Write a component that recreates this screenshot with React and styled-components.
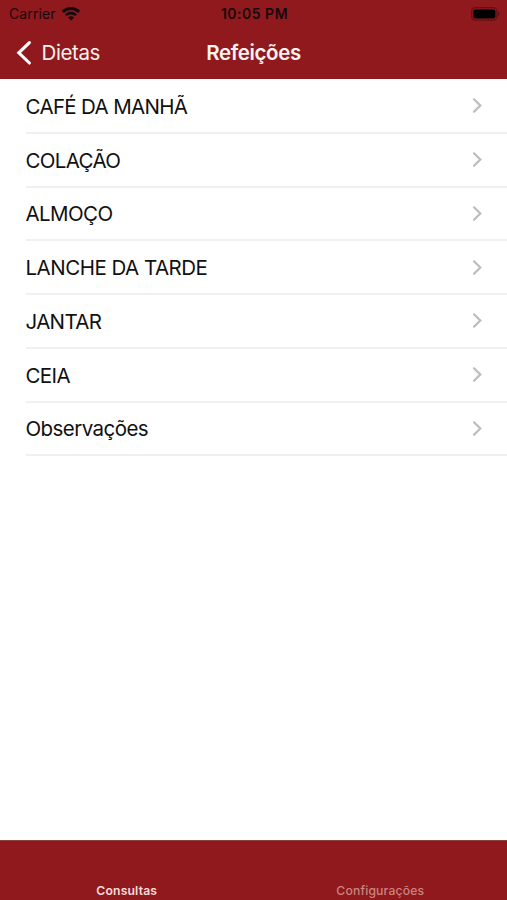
import React from "react";
import styled, { createGlobalStyle } from "styled-components";

const meals = [
  { name: "CAFÉ DA MANHÃ", key: "cafe", spacing: -0.66 },
  { name: "COLAÇÃO", key: "colacao", spacing: -0.64 },
  { name: "ALMOÇO", key: "almoco", spacing: -0.58 },
  { name: "LANCHE DA TARDE", key: "lanche", spacing: -0.5 },
  { name: "JANTAR", key: "jantar", spacing: -0.66 },
  { name: "CEIA", key: "ceia", spacing: -0.6 },
  { name: "Observações", key: "observacoes", spacing: -0.56 },
];

const tabs = [
  { name: "Consultas", key: "consultas", active: true },
  { name: "Configurações", key: "configuracoes", active: false },
];

function App() {
  return (
    <Screen>
      <GlobalStyle />
      <Header>
        <StatusBar>
          <Carrier>
            <CarrierName>Carrier</CarrierName>
            <WifiIcon />
          </Carrier>
          <Clock>10:05 PM</Clock>
          <BatteryIcon />
        </StatusBar>
        <NavBar>
          <BackButton>
            <BackIcon />
            <BackText>Dietas</BackText>
          </BackButton>
          <Title>Refeições</Title>
        </NavBar>
      </Header>
      <List>
        {meals.map((meal) => (
          <Row key={meal.key}>
            <RowText $spacing={meal.spacing}>{meal.name}</RowText>
            <Chevron />
          </Row>
        ))}
      </List>
      <TabBar>
        {tabs.map((tab) => (
          <Tab key={tab.key} $active={tab.active}>
            {tab.name}
          </Tab>
        ))}
      </TabBar>
    </Screen>
  );
}

export default App;

function WifiIcon() {
  return (
    <svg width="18" height="14" viewBox="0 0 18 14" fill="none" stroke="#16090b">
      <path d="M0.9 4.9C5.4 0.4 12.6 0.4 17.1 4.9" strokeWidth="2.9" />
      <path d="M3.9 8.1C6.8 5.4 11.2 5.4 14.1 8.1" strokeWidth="2.6" />
      <path d="M9 13.4L6 10.4C7.7 8.9 10.3 8.9 12 10.4Z" fill="#16090b" stroke="none" />
    </svg>
  );
}

function BatteryIcon() {
  return (
    <Battery width="29" height="14" viewBox="0 0 29 14">
      <rect x="0.7" y="0.7" width="25.2" height="12.4" rx="3.6" fill="none" stroke="#620f15" strokeWidth="1.2" />
      <rect x="2.4" y="2.4" width="22" height="9" rx="2" fill="#000" />
      <path d="M27 4.6C29 5.3 29 8.5 27 9.2Z" fill="#620f15" />
    </Battery>
  );
}

function BackIcon() {
  return (
    <svg width="16" height="26" viewBox="0 0 16 26" fill="none" stroke="#fff" strokeWidth="3.1">
      <path d="M13.4 2.6L2.8 12.8L13.4 23" strokeLinecap="round" strokeLinejoin="miter" />
    </svg>
  );
}

function Chevron() {
  return (
    <svg width="11" height="17" viewBox="0 0 11 17" fill="none" stroke="#bcbcbe" strokeWidth="2.2">
      <path d="M2 2.3L8.3 8.5L2 14.7" strokeLinecap="round" />
    </svg>
  );
}

const GlobalStyle = createGlobalStyle`
  body {
    margin: 0;
    background-color: #fff;
    font-family: Inter, "Liberation Sans", sans-serif;
  }
`;

const Screen = styled.div`
  height: 900px;
  display: flex;
  flex-direction: column;
  overflow: hidden;
`;

const Header = styled.div`
  height: 79px;
  flex-shrink: 0;
  background-color: #90191e;
`;

const StatusBar = styled.div`
  height: 27px;
  display: grid;
  grid-template-columns: 1fr auto 1fr;
  align-items: center;
  padding: 0 7px 0 9px;
  color: #16090b;
`;

const Carrier = styled.div`
  display: flex;
  align-items: center;
  gap: 6px;
`;

const CarrierName = styled.span`
  font-size: 14px;
  line-height: 17px;
  letter-spacing: 0.1px;
`;

const Clock = styled.span`
  font-size: 14px;
  line-height: 17px;
  font-weight: 600;
  letter-spacing: 0.5px;
`;

const Battery = styled.svg`
  justify-self: end;
`;

const NavBar = styled.div`
  height: 52px;
  display: grid;
  grid-template-columns: 1fr auto 1fr;
  align-items: center;
  padding: 0 16px;
`;

const BackButton = styled.div`
  display: flex;
  align-items: center;
  gap: 9.5px;
`;

const BackText = styled.span`
  color: #fdf0ee;
  font-size: 20.5px;
  line-height: 26px;
  letter-spacing: -0.4px;
`;

const Title = styled.span`
  color: #fff3f0;
  font-size: 20.5px;
  line-height: 26px;
  font-weight: 600;
  letter-spacing: -0.38px;
`;

const List = styled.div`
  flex: 1;
  padding: 1px 0 0 25.5px;
`;

const Row = styled.div`
  height: 53.75px;
  box-sizing: border-box;
  display: flex;
  align-items: center;
  justify-content: space-between;
  padding-right: 24.5px;
  border-bottom: 2px solid #f0f0f1;
`;

const RowText = styled.span`
  padding-top: 2px;
  color: #111;
  font-size: 20.5px;
  line-height: 26px;
  letter-spacing: ${(props) => props.$spacing}px;
`;

const TabBar = styled.div`
  height: 60px;
  flex-shrink: 0;
  box-sizing: border-box;
  display: flex;
  align-items: flex-end;
  background-color: #90191e;
  border-top: 1px solid #8c4038;
`;

const Tab = styled.div`
  flex: 1;
  padding-bottom: 1px;
  text-align: center;
  font-size: 12.2px;
  line-height: 16px;
  font-weight: ${(props) => (props.$active ? 600 : 500)};
  letter-spacing: 0.15px;
  color: ${(props) => (props.$active ? "#f7dcd8" : "#cb857f")};
`;
